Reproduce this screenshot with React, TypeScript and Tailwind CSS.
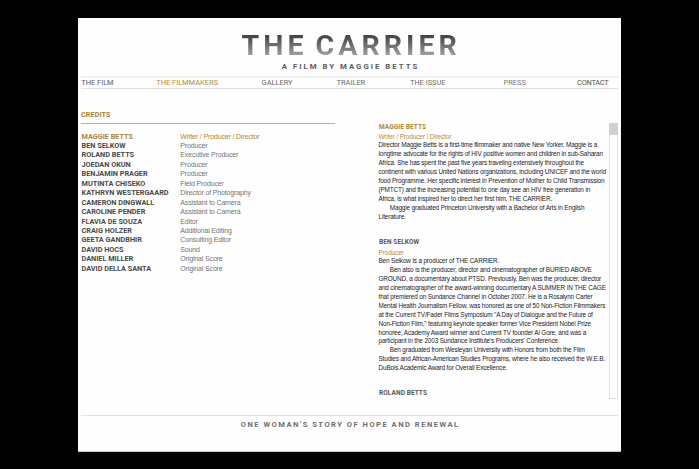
const nav = [
  { label: 'THE FILM', cls: 'w-[75px] text-[#606060]' },
  { label: 'THE FILMMAKERS', cls: 'w-[105.3px] text-[#b08d45]' },
  { label: 'GALLERY', cls: 'w-[75px] text-[#686868]' },
  { label: 'TRAILER', cls: 'w-[73.3px] text-[#6c6c6c]' },
  { label: 'THE ISSUE', cls: 'w-[93.7px] text-[#6c6c6c]' },
  { label: 'PRESS', cls: 'w-[73.5px] text-[#7c7c7c]' },
  { label: 'CONTACT', cls: 'tracking-[-0.32px] text-[#555]' },
];

const credits: [string, string][] = [
  ['MAGGIE BETTS', 'Writer / Producer / Director'],
  ['BEN SELKOW', 'Producer'],
  ['ROLAND BETTS', 'Executive Producer'],
  ['JOEDAN OKUN', 'Producer'],
  ['BENJAMIN PRAGER', 'Producer'],
  ['MUTINTA CHISEKO', 'Field Producer'],
  ['KATHRYN WESTERGAARD', 'Director of Photography'],
  ['CAMERON DINGWALL', 'Assistant to Camera'],
  ['CAROLINE PENDER', 'Assistant to Camera'],
  ['FLAVIA DE SOUZA', 'Editor'],
  ['CRAIG HOLZER', 'Additional Editing'],
  ['GEETA GANDBHIR', 'Consulting Editor'],
  ['DAVID HOCS', 'Sound'],
  ['DANIEL MILLER', 'Original Score'],
  ['DAVID DELLA SANTA', 'Original Score'],
];

const maggieBio = [
  [
    'Director Maggie Betts is a first-time filmmaker and native New Yorker. Maggie is a',
    'longtime advocate for the rights of HIV positive women and children in sub-Saharan',
    'Africa. She has spent the past five years traveling extensively throughout the',
    'continent with various United Nations organizations, including UNICEF and the world',
    'food Programme. Her specific interest in Prevention of Mother to Child Transmission',
    '(PMTCT) and the increasing potential to one day see an HIV free generation in',
    'Africa, is what inspired her to direct her first him, THE CARRIER.',
  ],
  ['Maggie graduated Princeton University with a Bachelor of Arts in English', 'Literature.'],
];

const benBio = [
  ['Ben Selkow is a producer of THE CARRIER.'],
  [
    'Ben also is the producer, director and cinematographer of BURIED ABOVE',
    'GROUND, a documentary about PTSD. Previously, Ben was the producer, director',
    'and cinematographer of the award-winning documentary A SUMMER IN THE CAGE',
    'that premiered on Sundance Channel in October 2007. He is a Rosalynn Carter',
    'Mental Health Journalism Fellow, was honored as one of 50 Non-Fiction Filmmakers',
    'at the Current TV/Fader Films Symposium "A Day of Dialogue and the Future of',
    'Non-Fiction Film," featuring keynote speaker former Vice President Nobel Prize',
    'honoree, Academy Award winner and Current TV founder Al Gore, and was a',
    'participant in the 2003 Sundance Institute\'s Producers\' Conference.',
  ],
  [
    'Ben graduated from Wesleyan University with Honors from both the Film',
    'Studies and African-American Studies Programs, where he also received the W.E.B.',
    'DuBois Academic Award for Overall Excellence.',
  ],
];

function Bio({ paragraphs }: { paragraphs: string[][] }) {
  return (
    <div className="text-[6.4px] leading-[8.93px] tracking-[-0.145px] text-[#1c1c2c]">
      {paragraphs.map((lines, p) => (
        <div key={p}>
          {lines.map((line, i) => (
            <div key={line} className={p > 0 && i === 0 ? 'pl-[11.3px]' : ''}>
              {line}
            </div>
          ))}
        </div>
      ))}
    </div>
  );
}

export default function App() {
  return (
    <div className="h-[469px] w-[699px] overflow-hidden bg-black pt-[18px] pl-[78px] font-['Liberation_Sans',Arial,sans-serif] whitespace-nowrap">
      <div className="flex h-[434px] w-[543px] flex-col border-b border-[#c4c4c4] bg-[#fefefe]">
        <header className="pt-[14px] font-['Roboto',sans-serif]">
          <h1 className="ml-[163.6px] w-fit bg-gradient-to-b from-[#454547] from-15% to-[#aaaaad] to-90% bg-clip-text text-[28.5px] leading-[28px] font-bold tracking-[4.05px] [word-spacing:-3.2px] text-transparent">
            THE CARRIER
          </h1>
          <p className="mt-[2px] ml-[203.8px] text-[7.8px] leading-[9px] font-bold tracking-[2px] text-[#5c5c5e]">
            A FILM BY MAGGIE BETTS
          </p>
          <nav className="mt-[5px] mr-[3px] ml-[3px] flex h-[13px] items-center border-t-2 border-b border-t-[#f0f0f0] border-b-[#e2e2e2] pl-[0.3px] text-[7.5px] leading-[10px] tracking-[-0.05px]">
            {nav.map((n) => (
              <a key={n.label} className={n.cls}>
                {n.label}
              </a>
            ))}
          </nav>
        </header>

        <main className="flex h-[326px]">
          <section className="w-[300px] pt-[21px] pl-[3px]">
            <h2 className="w-[254px] border-b border-b-[#cfb267] pb-[3px] font-['Roboto',sans-serif] text-[7.2px] leading-[10px] font-bold tracking-[0.1px] text-[#a87f2a]">
              CREDITS
            </h2>
            <ul className="mt-[7.6px]">
              {credits.map(([name, role], i) => (
                <li
                  key={name}
                  className={
                    i === 0
                      ? 'flex h-[9.44px] text-[7px] leading-[9.44px] text-[#ae8635]'
                      : 'flex h-[9.44px] text-[7px] leading-[9.44px] text-[#4a4a4a]'
                  }
                >
                  <span className="w-[99.3px] pl-[0.5px] font-['Roboto',sans-serif] text-[7.3px] font-bold tracking-[-0.01px]">{name}</span>
                  <span className={i === 0 ? 'tracking-[-0.14px]' : 'tracking-[-0.15px] text-[#747474]'}>{role}</span>
                </li>
              ))}
            </ul>
          </section>

          <section className="w-[231px] pt-[33.6px] pl-[0.5px]">
            <h3 className="pl-[0.5px] font-['Roboto',sans-serif] text-[6.5px] leading-[9px] font-bold tracking-[0.09px] text-[#ae8635]">MAGGIE BETTS</h3>
            <p className="mt-[0.8px] text-[6.5px] leading-[9px] tracking-[-0.16px] text-[#b58d45]">Writer / Producer / Director</p>
            <Bio paragraphs={maggieBio} />
            <h3 className="mt-[16px] pl-[0.5px] font-['Roboto',sans-serif] text-[6.5px] leading-[9px] font-bold tracking-[0.09px] text-[#58585a]">BEN SELKOW</h3>
            <p className="mt-[1.2px] text-[6.5px] leading-[9px] tracking-[-0.16px] text-[#b58d45]">Producer</p>
            <Bio paragraphs={benBio} />
            <h3 className="mt-[16px] pl-[0.5px] font-['Roboto',sans-serif] text-[6.5px] leading-[9px] font-bold tracking-[0.09px] text-[#58585a]">ROLAND BETTS</h3>
          </section>

          <div className="mt-[34px] h-[276px] w-[8.5px] border border-[#e0e0e0] bg-white">
            <div className="-mx-px -mt-px h-[12px] bg-[#d0d0d0]" />
          </div>
        </main>

        <footer className="mx-[3px] border-t border-[#e2e2e2] pt-[4px] pl-[159.8px] font-['Roboto',sans-serif] text-[7.6px] leading-[10px] font-bold tracking-[1.48px] text-[#707072]">
          ONE WOMAN'S STORY OF HOPE AND RENEWAL
        </footer>
      </div>
    </div>
  );
}
